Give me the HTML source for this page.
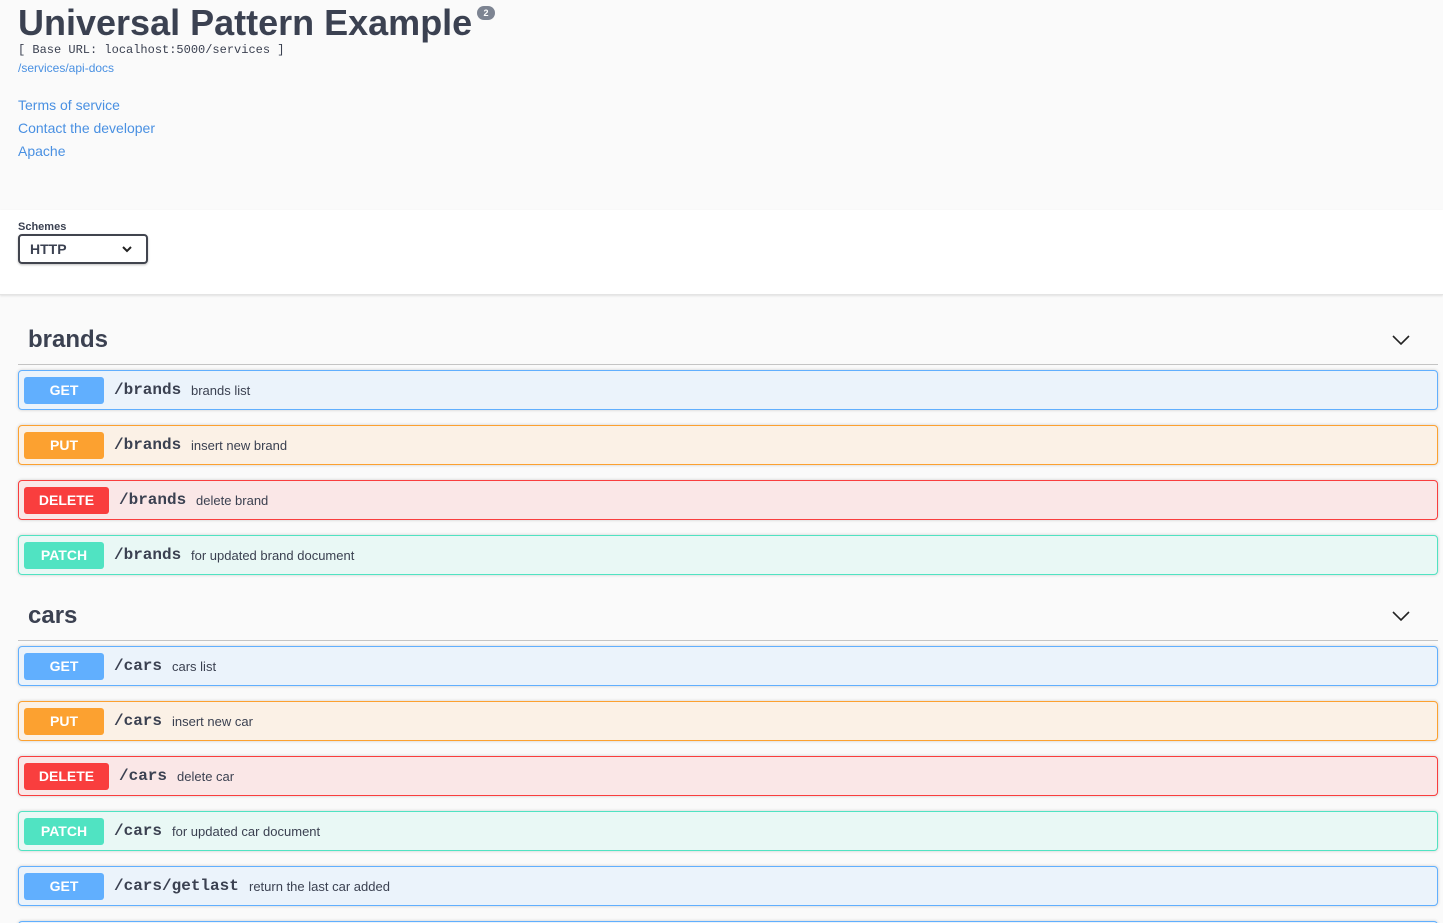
<!DOCTYPE html>
<html style="height:923px;overflow:hidden"><head><style>
*{box-sizing:border-box;margin:0;padding:0}
body{width:1443px;height:923px;overflow:hidden;background:#fafafa;font-family:"Liberation Sans",sans-serif;color:#3b4151;position:relative}
.a{position:absolute}
h1{position:absolute;left:18px;top:2px;font-size:36px;font-weight:bold;color:#3b4151;line-height:42px}
.badge{position:absolute;left:477px;top:6px;background:#7d8492;color:#fff;font-size:9px;font-weight:bold;border-radius:8px;width:18px;height:14px;text-align:center;line-height:14px}
.link{color:#4990e2;font-size:14px}
.sch{position:absolute;left:0;top:210px;width:1443px;height:85px;background:#fff;border-bottom:1px solid #e4e4e4;box-shadow:0 1px 2px rgba(0,0,0,.1)}
.sel{position:absolute;left:18px;top:24px;width:130px;height:30px;border:2px solid #41444e;border-radius:4px;box-shadow:0 1px 2px rgba(0,0,0,.25);font-weight:bold;font-size:14px;padding:5px 10px}
.tag{position:absolute;left:18px;width:1420px;height:45px;border-bottom:1px solid #c4c4c4}
.tag span{position:absolute;left:10px;top:6px;font-size:24px;font-weight:bold}
.tag svg{position:absolute;right:28px;top:15px}
.op{position:absolute;left:18px;width:1420px;height:40px;border:1px solid;border-radius:4px;box-shadow:0 0 3px rgba(0,0,0,.19)}
.m{position:absolute;left:5px;top:6px;width:80px;height:27px;border-radius:3px;color:#fff;font-weight:bold;font-size:14px;text-align:center;line-height:27px}
.p{position:absolute;top:10px;font-family:"Liberation Mono",monospace;font-weight:bold;font-size:16px;color:#3b4151}
.d{position:absolute;top:12px;font-size:13px;color:#3b4151}
.get{background:#ebf3fb;border-color:#61affe}.get .m{background:#61affe}
.put{background:#fbf1e6;border-color:#fca130}.put .m{background:#fca130}
.del{background:#fae7e7;border-color:#f93e3e}.del .m{background:#f93e3e;width:85px}
.pat{background:#e9f8f5;border-color:#50e3c2}.pat .m{background:#50e3c2}
</style></head><body>
<h1>Universal Pattern Example</h1><div class="badge">2</div>
<div class="a" style="left:18px;top:43px;font-family:'Liberation Mono',monospace;font-size:12px">[ Base URL: localhost:5000/services ]</div>
<div class="a link" style="left:18px;top:61px;font-size:12px">/services/api-docs</div>
<div class="a link" style="left:18px;top:97px">Terms of service</div>
<div class="a link" style="left:18px;top:120px">Contact the developer</div>
<div class="a link" style="left:18px;top:143px">Apache</div>
<div class="sch"><div class="a" style="left:18px;top:11px;font-size:11px;font-weight:bold">Schemes</div>
<div class="sel">HTTP<svg style="position:absolute;right:14px;top:10px" width="10" height="7" viewBox="0 0 10 7"><path d="M1 1l4 4 4-4" fill="none" stroke="#222" stroke-width="2"/></svg></div></div>

<div class="tag" style="top:320px"><span>brands</span><svg width="18" height="11" viewBox="0 0 18 11"><path d="M1 1l8 8 8-8" fill="none" stroke="#222" stroke-width="1.6"/></svg></div>
<div class="op get" style="top:370px"><div class="m">GET</div><div class="p" style="left:95px">/brands</div><div class="d" style="left:172px">brands list</div></div>
<div class="op put" style="top:425px"><div class="m">PUT</div><div class="p" style="left:95px">/brands</div><div class="d" style="left:172px">insert new brand</div></div>
<div class="op del" style="top:480px"><div class="m">DELETE</div><div class="p" style="left:100px">/brands</div><div class="d" style="left:177px">delete brand</div></div>
<div class="op pat" style="top:535px"><div class="m">PATCH</div><div class="p" style="left:95px">/brands</div><div class="d" style="left:172px">for updated brand document</div></div>

<div class="tag" style="top:596px"><span>cars</span><svg width="18" height="11" viewBox="0 0 18 11"><path d="M1 1l8 8 8-8" fill="none" stroke="#222" stroke-width="1.6"/></svg></div>
<div class="op get" style="top:646px"><div class="m">GET</div><div class="p" style="left:95px">/cars</div><div class="d" style="left:153px">cars list</div></div>
<div class="op put" style="top:701px"><div class="m">PUT</div><div class="p" style="left:95px">/cars</div><div class="d" style="left:153px">insert new car</div></div>
<div class="op del" style="top:756px"><div class="m">DELETE</div><div class="p" style="left:100px">/cars</div><div class="d" style="left:158px">delete car</div></div>
<div class="op pat" style="top:811px"><div class="m">PATCH</div><div class="p" style="left:95px">/cars</div><div class="d" style="left:153px">for updated car document</div></div>
<div class="op get" style="top:866px"><div class="m">GET</div><div class="p" style="left:95px">/cars/getlast</div><div class="d" style="left:230px">return the last car added</div></div>
<div class="op get" style="top:921px"></div>
</body></html>
